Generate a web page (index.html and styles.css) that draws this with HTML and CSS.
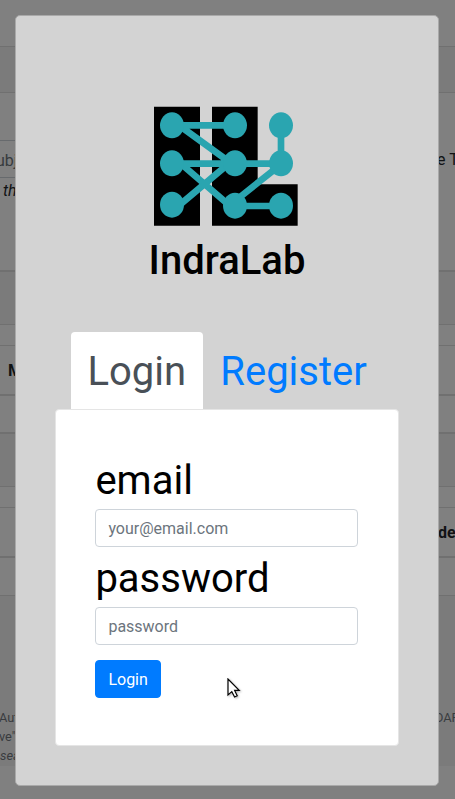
FILE: index.html
```
<!DOCTYPE html>
<html lang="en">
<head>
<meta charset="utf-8">
<title>IndraLab</title>
<link rel="stylesheet" href="styles.css">
</head>
<body>
<div class="page">
  <div class="row h47"></div>
  <div class="row shade h46"></div>
  <div class="row thick search">
    <div class="search-line"><span class="search-box">ubj</span><span>e T</span></div>
    <em class="hint">the</em>
  </div>
  <div class="row shade h53"></div>
  <div class="row h21"></div>
  <div class="row thick title"><b class="title-left">M</b></div>
  <div class="row thick h37"></div>
  <div class="row shade h54"></div>
  <div class="row h21"></div>
  <div class="row thick title"><b></b><b class="title-right">de</b></div>
  <div class="row h37"></div>
  <div class="footer">
    <div class="footer-line"><span class="aut">Aut</span><span class="dar">DAR</span></div>
    <div class="footer-line"><span class="ve">ve"</span></div>
    <div class="footer-line"><em>sea</em></div>
  </div>
</div>
<div class="modal">
  <svg class="logo" viewBox="42 33 432 360">
    <path d="M42 35H180V392H42ZM216 35H353V268H473V392H216Z"/>
    <g class="links">
      <path d="M95 91H285M423 91V206M95 206H423M285 333H423M95 75L285 213M95 182L285 346M95 350L285 190M285 318L423 208"/>
    </g>
    <g class="nodes">
      <ellipse cx="96" cy="91" rx="36" ry="39"/><ellipse cx="285" cy="91" rx="36" ry="39"/><ellipse cx="423" cy="91" rx="36" ry="39"/>
      <ellipse cx="96" cy="205" rx="36" ry="39"/><ellipse cx="285" cy="205" rx="36" ry="39"/><ellipse cx="423" cy="205" rx="36" ry="39"/>
      <ellipse cx="96" cy="329" rx="36" ry="39"/><ellipse cx="285" cy="332" rx="36" ry="39"/><ellipse cx="423" cy="332" rx="36" ry="39"/>
    </g>
  </svg>
  <h1>IndraLab</h1>
  <nav class="tabs"><a class="tab active">Login</a><a class="tab">Register</a></nav>
  <form class="card">
    <label>email</label>
    <input type="email" placeholder="your@email.com">
    <label>password</label>
    <input type="password" placeholder="password">
    <button type="button">Login</button>
  </form>
</div>
<svg class="cursor" viewBox="0 0 14 20"><path d="M1 1V17L4.8 13.6L7.6 19L10.2 17.8L7.6 12.4H12.2Z"/></svg>
</body>
</html>
```
FILE: styles.css
```
* { box-sizing: border-box; }
body {
  margin: 0;
  height: 799px;
  overflow: hidden;
  position: relative;
  background: #808080;
  color: #111315;
  font: 16px/24px Roboto, sans-serif;
}
.page { height: 799px; overflow: hidden; }
.row { border-bottom: 1px solid #707070; }
.thick { border-bottom: 2px solid #707070; }
.shade { background: #7b7b7b; }
.h21 { height: 21px; }
.h37 { height: 38px; }
.h46 { height: 46px; }
.h47 { height: 47px; }
.h53 { height: 53px; }
.h54 { height: 53px; }
.search { height: 179px; padding-top: 47px; }
.search-line { display: flex; justify-content: space-between; height: 38px; line-height: 39px; white-space: nowrap; }
.search-line span:last-child { width: 18px; }
.search-box { width: 200px; border: 1px solid #676a6d; border-left: 0; color: #373b3e; text-indent: -4px; line-height: 39px; }
.hint { display: block; margin: 1px 0 0 3px; }
.title { height: 50px; display: flex; justify-content: space-between; line-height: 50px; }
.title-left { margin-left: 8px; }
.title-right { width: 17px; }
.footer { height: 170px; padding-top: 112px; background: #7b7b7b; color: #393c3f; font-size: 12.8px; line-height: 19.2px; }
.footer-line { display: flex; justify-content: space-between; }
.aut, .ve { margin-left: -1px; }
.dar { width: 20px; white-space: nowrap; }
.modal {
  position: absolute;
  top: 15px;
  left: 15px;
  width: 424px;
  height: 771px;
  padding: 90px 39px 39px;
  background: lightgray;
  border: 1px solid #a9a9a9;
  border-radius: 5px;
  color: #000;
}
.logo { display: block; width: 144px; height: 120px; margin: 0 0 0 98.5px; }
.links { fill: none; stroke: #2aa5b0; stroke-width: 20; }
.nodes { fill: #2aa5b0; }
h1 { margin: 11px 0 47px; font-size: 40px; font-weight: 500; line-height: 48px; text-align: center; }
.tabs { display: flex; height: 77px; margin-left: 16px; }
.tab { padding: 10px 17px 7px 17.3px; font-size: 40px; line-height: 60px; color: #007bff; }
.active { width: 132px; padding-left: 16.5px; padding-right: 0; background: #fff; color: #495057; border-radius: 4px 4px 0 0; }
.card { height: 337px; padding: 39px 40px 39px 39.4px; background: #fff; border: 1px solid #e5e5e5; border-radius: 4px; }
label { display: block; height: 60px; padding-top: 2px; font-size: 40px; line-height: 60px; }
input {
  display: block;
  width: 100%;
  height: 38px;
  padding: 6px 12px;
  border: 1px solid #ced4da;
  border-radius: 4px;
  font: 16px/24px Roboto, sans-serif;
}
input::placeholder { color: #6c757d; opacity: 1; }
button {
  display: block;
  height: 38px;
  margin-top: 15px;
  padding: 7px 12px 5px;
  border: 1px solid #007bff;
  border-radius: 4px;
  background: #007bff;
  color: #fff;
  font: 16px/24px Roboto, sans-serif;
}
.cursor { position: absolute; left: 227px; top: 678px; width: 14px; height: 20px; fill: #fff; stroke: #000; stroke-width: 1.2; filter: drop-shadow(1px 1px 1px rgba(0, 0, 0, .3)); }
```
